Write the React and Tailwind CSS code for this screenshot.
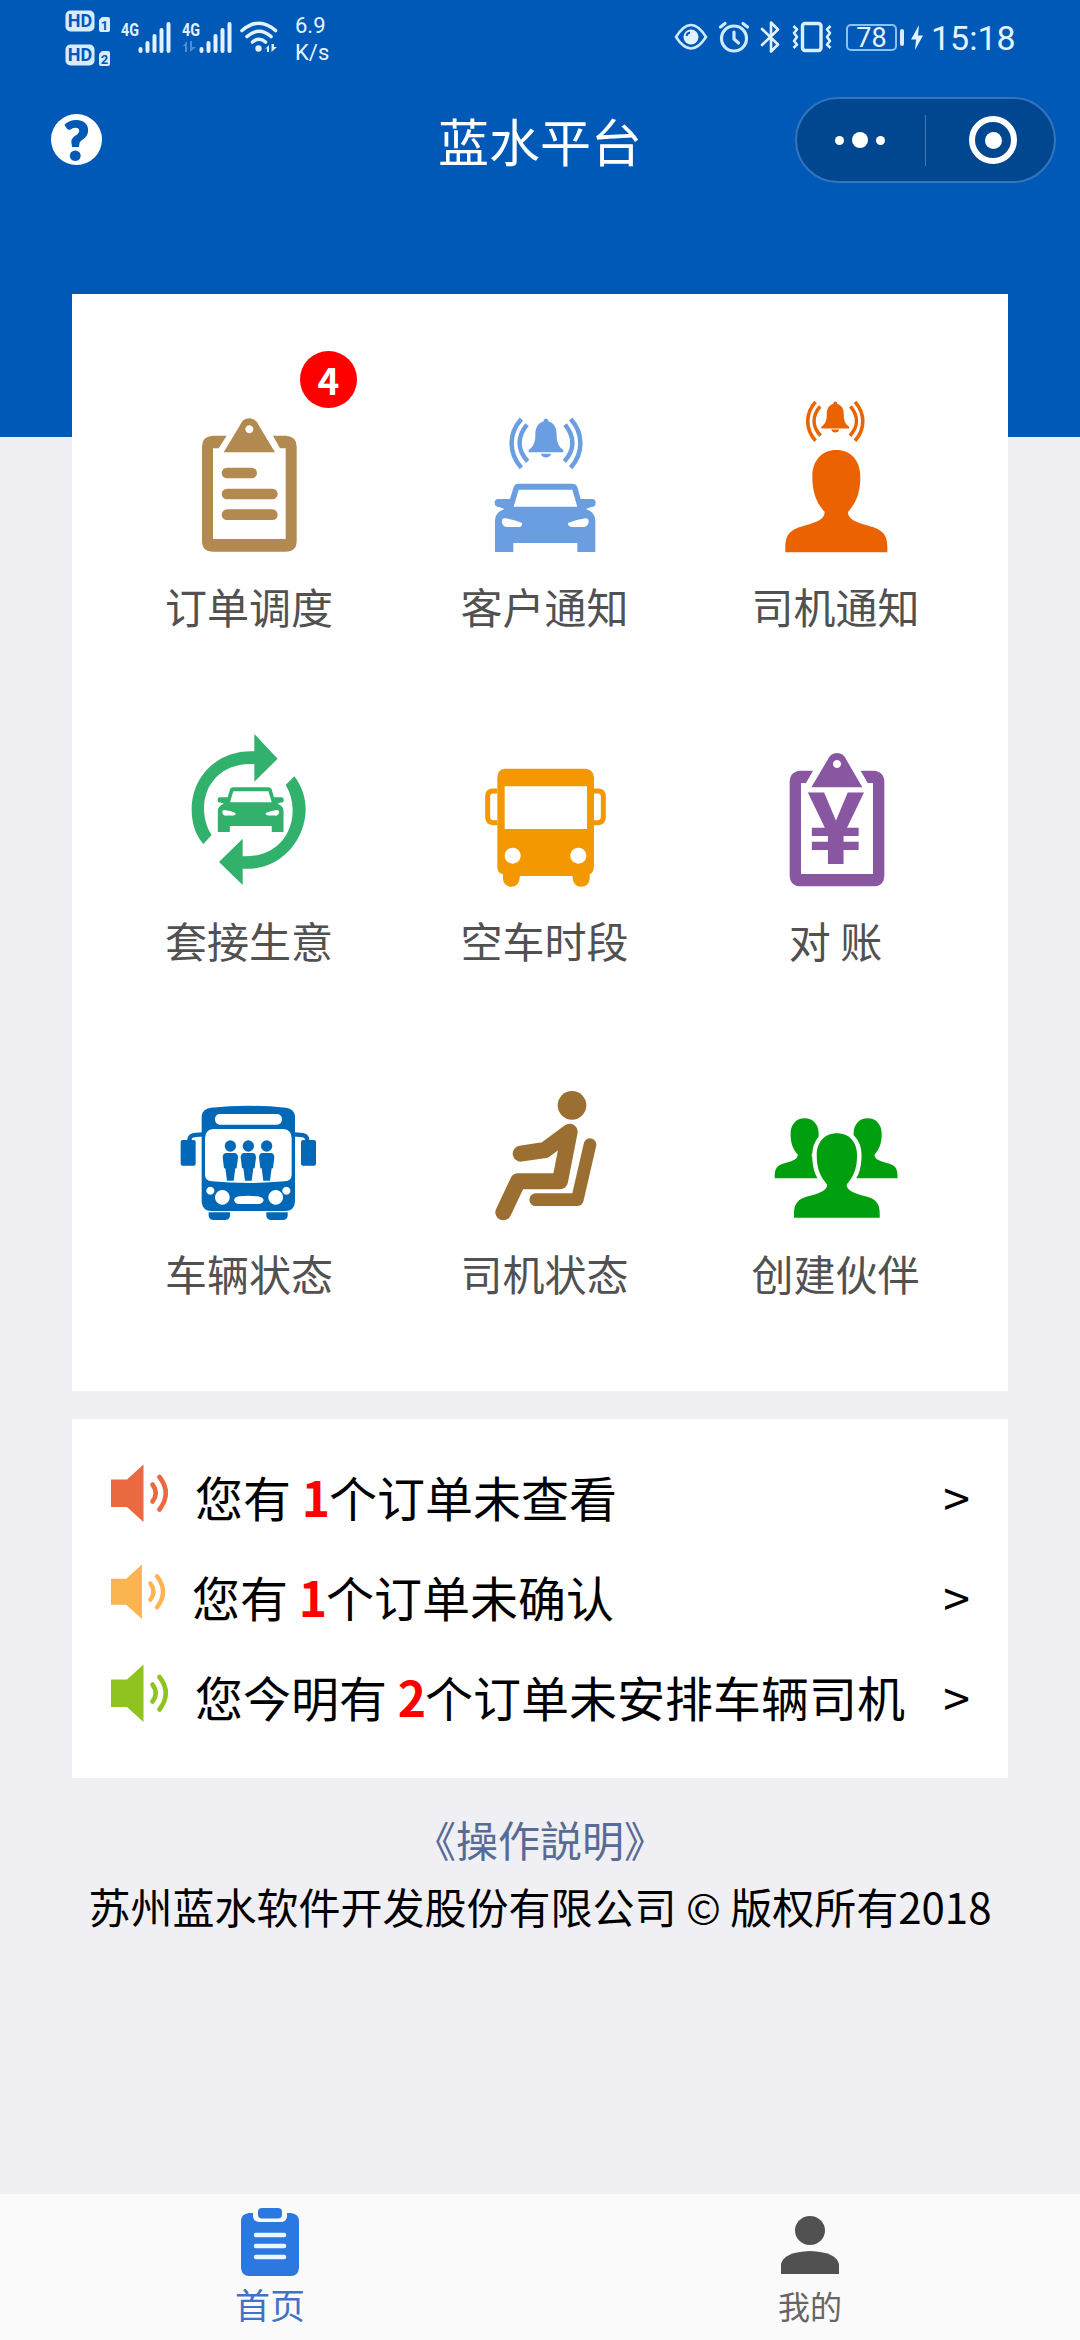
import React from 'react';

const PERSON =
  'M224 517 C223 478 226 456 265 442 C300 431 342 424 342 396 C318 368 305 340 305 290 C305 240 335 210 377 210 C419 210 449 240 449 290 C449 340 436 368 412 396 C412 424 454 431 489 442 C528 456 531 478 530 517 Z';

const Bell = () => (
  <g>
    <path d="M346 116 a7 7 0 0 1 7 8 C372 130 378 145 378 165 C378 190 385 200 398 210 V217 H294 V210 C307 200 314 190 314 165 C314 145 320 130 339 124 a7 7 0 0 1 7 -8Z" />
    <path d="M331 221 H361 C359 236 333 236 331 221Z" />
    <g fill="none" stroke="currentColor" strokeWidth="13.500">
      <path d="M272 117 C233 160 233 220 272 263" />
      <path d="M289 134 C259 170 259 210 291 244" />
      <path d="M420 117 C459 160 459 220 420 263" />
      <path d="M403 134 C433 170 433 210 401 244" />
    </g>
  </g>
);

const Car = () => (
  <path
    fillRule="evenodd"
    d="M264 311 H424 Q438 311 441 324 L450 357 H484 Q495 357 495 368 Q495 381 482 381 L466 387 Q494 397 494 420 V516 H440 V489 H248 V516 H193 V420 Q193 397 221 387 L205 381 Q192 381 192 368 Q192 357 203 357 H238 L248 324 Q251 311 264 311Z M264 329 L249 380 H440 L425 329Z M222 415 Q212 416 214 427 Q216 442 232 441 H265 Q276 439 274 429 Q250 418 222 415Z M465 415 Q475 416 474 427 Q471 442 455 441 H423 Q411 439 412 429 Q438 418 465 415Z"
  />
);

const OrderIcon = () => (
  <g>
    <path d="M260 317 H218 Q186 319 186 350 V632 Q186 665 220 665 H437 Q470 665 470 632 V350 Q470 319 438 317 H399 L420 355 H437 V627 H219 V355 H236Z" />
    <path fillRule="evenodd" d="M251 367 L299 287 Q308 265 328 265 Q348 265 357 287 L405 367Z M328 286 a12 12 0 1 0 .1 0Z" />
    <g stroke="currentColor" strokeWidth="32" strokeLinecap="round">
      <path d="M261 429 H335" />
      <path d="M261 492 H397" />
      <path d="M261 554 H397" />
    </g>
  </g>
);

const CustomerIcon = () => (
  <g>
    <Bell />
    <Car />
  </g>
);

const DriverNoticeIcon = () => (
  <g>
    <g transform="translate(97 -28) scale(0.8)">
      <Bell />
    </g>
    <path d={PERSON} />
  </g>
);

const LoopIcon = () => (
  <g>
    <path d="M343 70 L413 144 L343 213 V160 C250 155 190 215 192 300 Q195 345 215 373 L190 400 C165 370 155 335 155 297 C155 195 235 117 343 122Z" />
    <path d="M308 523 L237 454 L308 384 V437 C400 440 458 380 458 297 Q457 255 437 223 L463 197 C485 225 497 260 497 297 C495 395 415 482 308 474Z" />
    <g transform="translate(107 26) scale(0.655)">
      <Car />
    </g>
  </g>
);

const BusIcon = () => (
  <g>
    <path
      fillRule="evenodd"
      d="M222 174 H464 Q490 176 490 202 V468 Q488 488 477 490 V505 Q475 528 450 528 Q427 528 425 496 H268 Q266 528 243 528 Q219 528 217 505 V490 Q200 488 200 468 V202 Q200 176 222 174Z M222 227 V355 H469 V227Z M246 411 a24 24 0 1 0 .1 0Z M443 411 a24 24 0 1 0 .1 0Z"
    />
    <g fill="none" stroke="currentColor" strokeWidth="15">
      <path d="M200 241 H186 Q171 243 171 256 V320 Q171 334 186 336 H200" />
      <path d="M488 241 H504 Q518 243 518 256 V320 Q518 334 504 336 H488" />
    </g>
  </g>
);

const BillIcon = () => (
  <g>
    <path d="M1147 180 H1110 Q1077 182 1077 215 V492 Q1077 527 1112 527 H1328 Q1361 527 1361 492 V215 Q1361 182 1328 180 H1290 L1311 217 H1327 V490 H1111 V217 H1126Z" />
    <path fillRule="evenodd" d="M1142 230 L1190 149 Q1199 127 1219 127 Q1239 127 1248 149 L1295 230Z M1219 148 a12 12 0 1 0 .1 0Z" />
    <text
      x="1130"
      y="460"
      textLength="172"
      lengthAdjust="spacingAndGlyphs"
      fontFamily="Roboto, sans-serif"
      fontWeight="700"
      fontSize="302"
    >
      ¥
    </text>
  </g>
);

const Passenger = ({ x }) => (
  <g transform={`translate(${x} 0)`}>
    <circle cx="0" cy="228" r="17" />
    <path d="M-14 249 H14 Q23 251 23 262 L19 295 H15 L10 332 H-10 L-15 295 H-19 L-23 262 Q-23 251 -14 249Z" />
  </g>
);

const VehicleIcon = () => (
  <g>
    <path
      fillRule="evenodd"
      d="M185 138 Q187 117 212 113 Q325 102 438 113 Q463 117 465 138 V395 Q463 422 436 423 H214 Q187 422 185 395Z M238 132 Q225 134 225 148 Q225 162 238 164 H412 Q426 162 426 148 Q426 134 412 132Z M220 177 Q195 179 195 205 V315 Q196 332 215 334 Q325 344 435 334 Q454 332 455 315 V205 Q455 179 430 177Z M211 350 a12 12 0 1 0 .1 0Z M439 350 a12 12 0 1 0 .1 0Z M247 360 a22 22 0 1 0 .1 0Z M407 360 a22 22 0 1 0 .1 0Z M297 379 Q325 376 354 379 Q370 382 371 391 Q368 402 354 402 H297 Q285 402 282 391 Q284 381 297 379Z"
    />
    <path d="M206 427 H270 V438 Q268 450 255 450 H221 Q208 450 206 438Z M379 427 H443 V438 Q441 450 428 450 H394 Q381 450 379 438Z" />
    <rect x="122" y="210" width="45" height="77" rx="6" />
    <rect x="483" y="210" width="45" height="77" rx="6" />
    <g fill="none" stroke="currentColor" strokeWidth="13">
      <path d="M148 212 C148 195 160 194 190 193" />
      <path d="M502 212 C502 195 490 194 460 193" />
    </g>
    <Passenger x={271} />
    <Passenger x={325} />
    <Passenger x={380} />
  </g>
);

const SeatIcon = () => (
  <g>
    <circle cx="424" cy="106" r="43" />
    <g fill="none" stroke="currentColor" strokeLinecap="round" strokeLinejoin="round">
      <path strokeWidth="48" d="M218 427 L262 334 H388 L417 185 L343 240 L270 251" />
      <path strokeWidth="38" d="M478 224 L440 389 H315" />
    </g>
    <path d="M405 180 L372 330 L395 330 L425 190Z" />
  </g>
);

const PartnerIcon = () => (
  <g>
    <path transform="translate(901 22) scale(0.586)" d={PERSON} />
    <path transform="translate(1090 22) scale(0.586)" d={PERSON} />
    <path
      transform="translate(902 17) scale(0.84 0.824)"
      d={PERSON}
      stroke="#fff"
      strokeWidth="32"
      style={{ paintOrder: 'stroke' }}
    />
  </g>
);

const rows = [
  [
    { label: '订单调度', color: 'text-[#b2894e]', box: '87 150 480 540', icon: OrderIcon, badge: 4 },
    { label: '客户通知', color: 'text-[#6a9ee0]', box: '103 0 480 540', icon: CustomerIcon },
    { label: '司机通知', color: 'text-[#eb6300]', box: '136 0 480 540', icon: DriverNoticeIcon },
  ],
  [
    { label: '套接生意', color: 'text-[#32b16c]', box: '87 10 480 540', icon: LoopIcon },
    { label: '空车时段', color: 'text-[#f39800]', box: '103 10 480 540', icon: BusIcon },
    { label: '对 账', color: 'text-[#8957a1]', box: '976 10 480 540', icon: BillIcon },
  ],
  [
    { label: '车辆状态', color: 'text-[#0068b7]', box: '87 -69 480 540', icon: VehicleIcon },
    { label: '司机状态', color: 'text-[#9b6f32]', box: '103 -69 480 540', icon: SeatIcon },
    { label: '创建伙伴', color: 'text-[#009f10]', box: '976 -69 480 540', icon: PartnerIcon },
  ],
];

const notices = [
  { before: '您有 ', count: 1, after: '个订单未查看', color: 'text-[#eb6940]', size: 'w-[60px] -mt-[5px]' },
  { before: '您有 ', count: 1, after: '个订单未确认', color: 'text-[#fab450]', size: 'w-[57px] -mt-[8px]' },
  { before: '您今明有 ', count: 2, after: '个订单未安排车辆司机', color: 'text-[#8fc320]', size: 'w-[60px] -mt-[5px]' },
];

const Tile = ({ item }) => {
  const Icon = item.icon;
  return (
    <div className="relative flex flex-col items-center">
      <svg viewBox={item.box} fill="currentColor" className={`w-[160px] h-[180px] ${item.color}`}>
        <Icon />
      </svg>
      <span className="mt-[16px] mb-[2px] h-[60px] leading-[60px] text-[42px] text-[#515151] whitespace-pre">
        {item.label}
      </span>
      {item.badge && (
        <span className="absolute left-[198px] -top-[29px] w-[57px] h-[57px] rounded-full bg-[#fe0000] text-white text-[37px] leading-[56px] font-bold text-center">
          {item.badge}
        </span>
      )}
    </div>
  );
};

const HdCard = ({ sim }) => (
  <svg viewBox="0 0 46 22" className="w-[46px] h-[22px] overflow-visible">
    <rect x="0.5" y="0.5" width="29" height="21" rx="5" fill="#d9ecff" />
    <text x="15" y="17" textAnchor="middle" fontFamily="Roboto, sans-serif" fontWeight="700" fontSize="18" fill="#0059b7">
      HD
    </text>
    <path d="M37 7 H43 Q45 7 45 9 V20 Q45 22 43 22 H36 Q34 22 34 20 V10Z" fill="#d9ecff" />
    <text x="39.500" y="20" textAnchor="middle" fontFamily="Roboto, sans-serif" fontWeight="700" fontSize="13" fill="#0059b7">
      {sim}
    </text>
  </svg>
);

const Signal = ({ data }) => (
  <svg viewBox="0 0 52 34" className="w-[52px] h-[34px] overflow-visible" fill="#e2f2ff">
    <text x="0" y="15" fontFamily="Roboto, sans-serif" fontWeight="700" fontSize="18.500" textLength="18" lengthAdjust="spacingAndGlyphs">
      4G
    </text>
    {data && <path d="M1 25 L5 20 V31 H3 V25Z M8 20 H10 V26 H14 L8 31Z" opacity="0.35" />}
    <g stroke="#e2f2ff" strokeWidth="4" strokeLinecap="round">
      <path d="M19.500 28 V30 M26.500 22 V30 M33.500 15 V30 M40.500 9 V30 M47.500 3 V30" />
    </g>
  </svg>
);

const StatusBar = () => (
  <div className="flex h-[75px] pl-[65px] font-[Roboto,sans-serif] text-[#e4f3ff]">
    <div className="flex flex-col gap-[12px] pt-[10px] w-[56px]">
      <HdCard sim="1" />
      <HdCard sim="2" />
    </div>
    <div className="flex pt-[21px] w-[119px] gap-[9px]">
      <Signal />
      <Signal data />
    </div>
    <svg viewBox="0 0 38 32" className="mt-[21px] w-[38px] h-[32px]" fill="none" stroke="#e2f2ff" strokeWidth="3.600" strokeLinecap="round">
      <path d="M2 9.500 Q19 -5 35.500 9.500" />
      <path d="M7 15.500 Q19 5 31 15.500" />
      <path d="M12.500 21 Q19 15.500 25.500 21" />
      <circle cx="18.500" cy="27.500" r="3.200" fill="#e2f2ff" stroke="none" />
      <path d="M24 29 L29 24 V31 H27 V27Z M31.500 23 V31 L37 26 H34V23Z" fill="#e2f2ff" stroke="none" />
    </svg>
    <div className="ml-[17px] mt-[12px] w-[60px] text-[22px] leading-[27px] whitespace-nowrap">
      <p>6.9</p>
      <p>K/s</p>
    </div>
    <svg viewBox="0 0 34 28" className="ml-[319px] mt-[23px] w-[34px] h-[28px]" fill="none" stroke="#cfeaff" strokeWidth="2.600">
      <path d="M2 14 Q17 -10 32 14 Q17 37 2 14Z" />
      <circle cx="17" cy="14" r="7.500" fill="#e2f2ff" stroke="none" />
      <path d="M12.500 13 Q13 10 16 9.500" stroke="#0059b7" strokeWidth="1.800" />
    </svg>
    <svg viewBox="0 0 32 32" className="ml-[10px] mt-[21px] w-[32px] h-[32px]" fill="none" stroke="#cfeaff" strokeWidth="3.200" strokeLinecap="round">
      <circle cx="16" cy="17.500" r="12.500" />
      <path d="M2.500 6 L7 2.500 M29.500 6 L25 2.500 M16 11 V18 L20.500 22" />
    </svg>
    <svg viewBox="0 0 20 34" className="ml-[10px] mt-[20px] w-[20px] h-[34px]" fill="none" stroke="#e2f2ff" strokeWidth="2.600" strokeLinejoin="round" strokeLinecap="round">
      <path d="M2 9 L18 24.500 L11 31.500 V2.500 L18 9.500 L2 25" />
    </svg>
    <svg viewBox="0 0 40 32" className="ml-[12px] mt-[21px] w-[40px] h-[32px]" fill="none" stroke="#d9f0ff" strokeWidth="3.400" strokeLinejoin="round">
      <rect x="10.500" y="2.500" width="18.500" height="27" rx="2.500" />
      <path d="M1.500 5 L5 8.500 L2 12 L5 16 L2 20 L5 23.500 L1.500 27 M38.500 5 L35 8.500 L38 12 L35 16 L38 20 L35 23.500 L38.500 27" strokeWidth="2.600" />
    </svg>
    <div className="ml-[14px] mt-[24px] flex items-center h-[27px]">
      <span className="w-[51px] h-[27px] border-2 border-[#8fc0f2] rounded-[5px] text-[27px] leading-[24px] text-center">
        78
      </span>
      <span className="ml-[3px] w-[4px] h-[17px] rounded-sm bg-[#d9ecff]" />
    </div>
    <svg viewBox="0 0 12 26" className="ml-[7px] mt-[25px] w-[12px] h-[26px]" fill="#e2f2ff">
      <path d="M8 0 L0 14.500 H5 L4 25 L12 10.500 H7Z" />
    </svg>
    <span className="ml-[8px] mt-[17px] text-[34px] leading-[42px] whitespace-nowrap">15:18</span>
  </div>
);

const NavBar = () => (
  <div className="flex items-center h-[130px] pl-[51px] pr-[24px]">
    <svg viewBox="0 0 52 52" className="w-[52px] h-[52px] overflow-visible">
      <circle cx="25.500" cy="25.500" r="25.500" fill="#fff" />
      <text x="25.500" y="45.500" textAnchor="middle" fontFamily="Lato, sans-serif" fontWeight="900" fontSize="54" fill="#0059b7" stroke="#0059b7" strokeWidth="2">
        ?
      </text>
    </svg>
    <h1 className="ml-[335px] w-[204px] text-[51px] leading-[60px] text-white whitespace-nowrap">蓝水平台</h1>
    <div className="ml-auto flex items-center w-[261px] h-[86px] rounded-full border-2 border-[#3375bd] bg-[#004790]">
      <div className="flex w-[128px] items-center justify-center gap-[8px] pr-[2px]">
        <span className="w-[9px] h-[9px] rounded-full bg-white" />
        <span className="w-[16px] h-[16px] rounded-full bg-white" />
        <span className="w-[9px] h-[9px] rounded-full bg-white" />
      </div>
      <span className="w-px h-[51px] bg-[#4079b3]" />
      <div className="flex w-[128px] items-center justify-center pl-[6px]">
        <span className="flex items-center justify-center w-[48px] h-[48px] rounded-full border-[6px] border-white">
          <span className="w-[17px] h-[17px] rounded-full bg-white" />
        </span>
      </div>
    </div>
  </div>
);

const App = () => {
  return (
    <div
      className="flex flex-col w-[1080px] h-[2340px] bg-[#efeff4] overflow-hidden font-['Noto_Sans_CJK_SC',sans-serif]"
      lang="zh-CN"
    >
      <header className="h-[437px] shrink-0 bg-[#0059b7]">
        <StatusBar />
        <NavBar />
      </header>

      <main className="relative -mt-[143px] flex flex-1 flex-col items-center">
        <section className="w-[936px] h-[1097px] shrink-0 bg-white pt-[86px] pl-[30px] flex flex-col gap-[75.500px]">
          {rows.map((row, i) => (
            <div key={i} className="grid grid-cols-[294px_297px_285px]">
              {row.map((item) => (
                <Tile key={item.label} item={item} />
              ))}
            </div>
          ))}
        </section>

        <section className="mt-[28px] w-[936px] h-[359px] shrink-0 bg-white pt-[27px] pl-[39px] pr-[38px]">
          {notices.map((n) => (
            <div key={n.after} className="flex items-center h-[100px] text-[48px] leading-[70px] text-black whitespace-pre">
              <svg viewBox="0 0 60 60" fill="currentColor" className={`${n.size} ${n.color}`}>
                <path d="M0 15.500 H16 L32.500 0.500 V58 L16 43 H0Z" />
                <g fill="none" stroke="currentColor" strokeLinecap="round" strokeWidth="4.600">
                  <path d="M41.500 20.500 Q48 29 41.500 37.500" />
                  <path d="M48.500 13 Q61 29 48.500 45.500" />
                </g>
              </svg>
              <p className="pl-[24px]">
                {n.before}
                <b className="-mr-[1px] text-[#fe0000]">{n.count}</b>
                {n.after}
              </p>
              <span className="ml-auto">&gt;</span>
            </div>
          ))}
        </section>

        <footer className="mt-[27px] text-center text-[42px] leading-[67px] whitespace-nowrap">
          <p className="text-[#576b95]">《操作説明》</p>
          <p className="text-black">苏州蓝水软件开发股份有限公司 © 版权所有2018</p>
        </footer>
      </main>

      <nav className="grid grid-cols-2 h-[146px] shrink-0 bg-[#fafafa]">
        <div className="flex flex-col items-center">
          <svg viewBox="0 0 58 68" className="mt-[14px] w-[58px] h-[68px]" fill="#2b78e0">
            <path d="M8 5 H12 V9 Q13 14 18 14 H40 Q45 14 46 9 V5 H50 Q58 6 58 13 V60 Q57 68 50 68 H8 Q1 68 0 60 V13 Q0 6 8 5Z" />
            <rect x="17" y="0" width="24" height="10.500" rx="4" />
            <path d="M15 27 H43 M15 38 H43 M15 49 H43" stroke="#eef5ff" strokeWidth="4.600" strokeLinecap="round" />
          </svg>
          <span className="mt-[3px] text-[35px] leading-[50px] text-[#3f72c9]">首页</span>
        </div>
        <div className="flex flex-col items-center">
          <svg viewBox="0 0 58 58" className="mt-[22px] w-[58px] h-[58px]" fill="#515151">
            <ellipse cx="29" cy="14.500" rx="15" ry="14.500" />
            <path d="M0 58 V48 Q3 36 29 35 Q55 36 58 48 V58Z" />
          </svg>
          <span className="mt-[7px] text-[32px] leading-[48px] text-[#666]">我的</span>
        </div>
      </nav>
    </div>
  );
};

export default App;
